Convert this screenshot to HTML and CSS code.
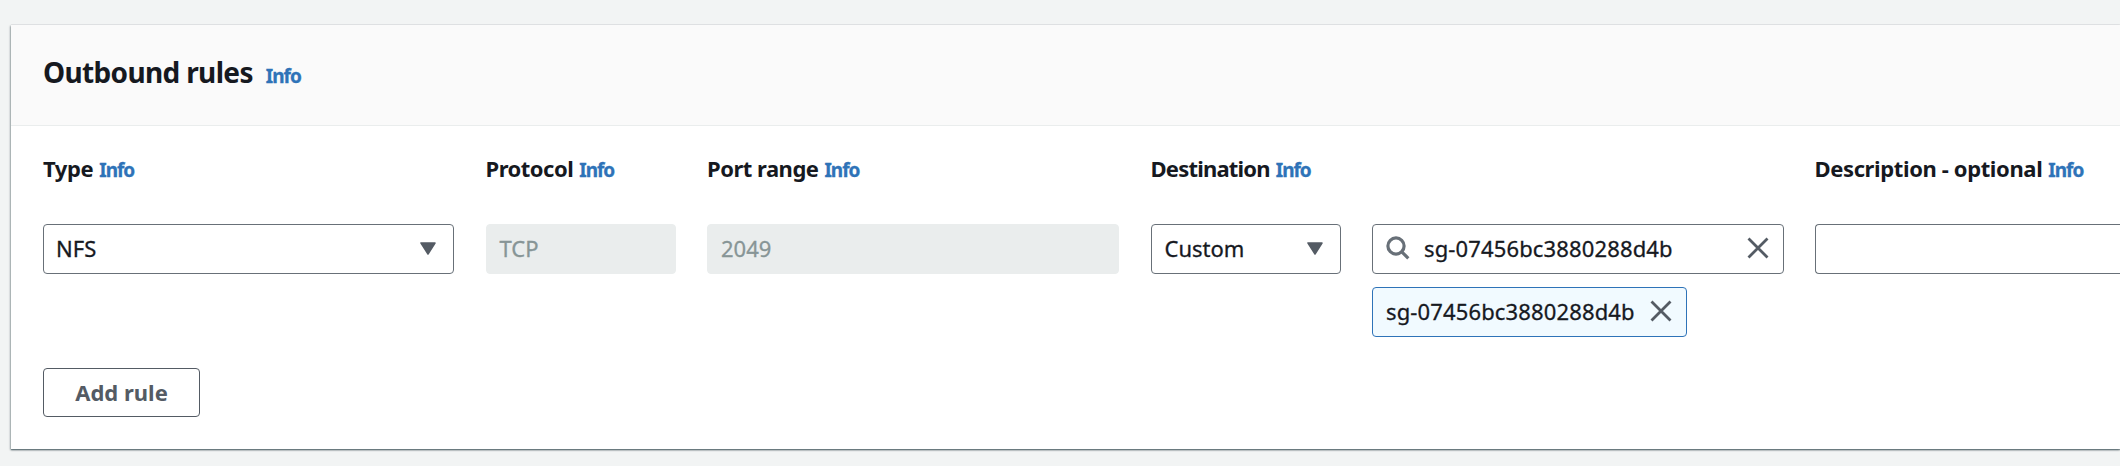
FILE: index.html
```html
<!DOCTYPE html>
<html lang="en">
<head>
<meta charset="utf-8">
<title>Outbound rules</title>
<link rel="stylesheet" href="styles.css">
</head>
<body>
<main class="panel">
  <header class="panel-header">
    <h2 class="title">Outbound rules</h2>
    <a class="info">Info</a>
  </header>
  <div class="panel-body">
    <div class="grid labels">
      <div class="label"><span class="type">Type</span><a class="info">Info</a></div>
      <div class="label"><span class="protocol">Protocol</span><a class="info">Info</a></div>
      <div class="label"><span class="port">Port range</span><a class="info">Info</a></div>
      <div class="label wide"><span class="dest">Destination</span><a class="info">Info</a></div>
      <div class="label"><span class="desc">Description - optional</span><a class="info">Info</a></div>
    </div>
    <div class="grid fields">
      <div class="field select"><span>NFS</span><svg class="caret" viewBox="0 0 16 13"><path d="M1 1H15L8 12Z"/></svg></div>
      <div class="field disabled"><span>TCP</span></div>
      <div class="field disabled"><span>2049</span></div>
      <div class="field select"><span class="custom">Custom</span><svg class="caret" viewBox="0 0 16 13"><path d="M1 1H15L8 12Z"/></svg></div>
      <div class="stack">
        <div class="field search">
          <svg class="magnifier" viewBox="0 0 24 24"><circle cx="10" cy="10" r="8.1"/><path d="M15.8 15.8L22.3 22.3"/></svg>
          <span class="sg">sg-07456bc3880288d4b</span>
          <svg class="cross" viewBox="0 0 22 22"><path d="M1.5 1.5L20.5 20.5M20.5 1.5L1.5 20.5"/></svg>
        </div>
        <div class="field token">
          <span class="sg">sg-07456bc3880288d4b</span>
          <svg class="cross" viewBox="0 0 22 22"><path d="M1.5 1.5L20.5 20.5M20.5 1.5L1.5 20.5"/></svg>
        </div>
      </div>
      <div class="field open"></div>
    </div>
    <button class="button"><span>Add rule</span></button>
  </div>
</main>
</body>
</html>
```
FILE: styles.css
```css
* { box-sizing: border-box; }
body {
  margin: 0;
  height: 466px;
  overflow: hidden;
  padding: 25px 0 0 11px;
  background: #f2f4f4;
  font-family: "Noto Sans", sans-serif;
  font-size: 22px;
  line-height: 30px;
  color: #16191f;
}
.panel {
  height: 424px;
  background: #fff;
  box-shadow: 0 1px 1px 0 rgba(0, 28, 36, .3), 0 1px 2px 0 rgba(0, 28, 36, .4), -1px 1px 2px 0 rgba(0, 28, 36, .2), 0 -1px 0 #e8eaeb;
}
.panel-header {
  height: 101px;
  padding: 28px 32px 0;
  display: flex;
  align-items: baseline;
  background: #fafafa;
  border-bottom: 1px solid #eaeded;
}
.title { margin: 0; font-size: 28px; line-height: 38px; font-weight: 700; letter-spacing: -.65px; white-space: nowrap; }
.info { color: #2e73b8; font-size: 19px; line-height: 30px; font-weight: 700; letter-spacing: -1px; -webkit-text-stroke: .3px #2e73b8; }
.title + .info { margin-left: 13px; }
.panel-body { padding: 27px 0 0 32px; }
.grid {
  display: grid;
  grid-template-columns: 411px 190px 412px 190px 411px 1fr;
  column-gap: 31.5px;
}
.label { display: flex; align-items: baseline; gap: 6px; white-space: nowrap; font-weight: 700; height: 30px; }
.wide { grid-column: span 2; }
.type { letter-spacing: -.4px; }
.protocol { letter-spacing: -.5px; }
.port { letter-spacing: -.5px; }
.dest { letter-spacing: -.8px; }
.desc { letter-spacing: -.38px; }
.fields { margin-top: 41px; }
.field {
  height: 50px;
  padding: 0 12px 2px;
  display: flex;
  align-items: center;
  border: 1px solid #687078;
  border-radius: 4px;
  white-space: nowrap;
  -webkit-text-stroke: .3px currentColor;
}
.select { justify-content: space-between; padding-right: 17px; }
.caret { width: 16px; height: 13px; fill: #545b64; stroke: #545b64; stroke-width: 1.5; stroke-linejoin: round; }
.custom { margin-left: 1px; }
.disabled { background: #eaeded; border-color: #eaeded; color: #879596; padding-left: 13px; }
.stack { display: flex; flex-direction: column; align-items: flex-start; gap: 13px; }
.sg { letter-spacing: .14px; }
.search { width: 412px; padding-left: 13px; padding-right: 14px; }
.magnifier { width: 24px; height: 24px; margin-right: 14px; fill: none; stroke: #687078; stroke-width: 3.2; }
.cross { width: 22px; height: 22px; margin-left: auto; fill: none; stroke: #545b64; stroke-width: 2.8; }
.token { width: 315px; background: #f1faff; border-color: #2e73b8; padding-left: 13px; padding-right: 14px; }
.open { border-right: 0; border-radius: 4px 0 0 4px; }
.button {
  display: block;
  width: 157px;
  height: 49px;
  margin-top: 31px;
  padding: 0 0 2px;
  background: #fff;
  border: 1px solid #545b64;
  border-radius: 4px;
  font: 700 22px/30px "Noto Sans", sans-serif;
  color: #545b64;
}
```
